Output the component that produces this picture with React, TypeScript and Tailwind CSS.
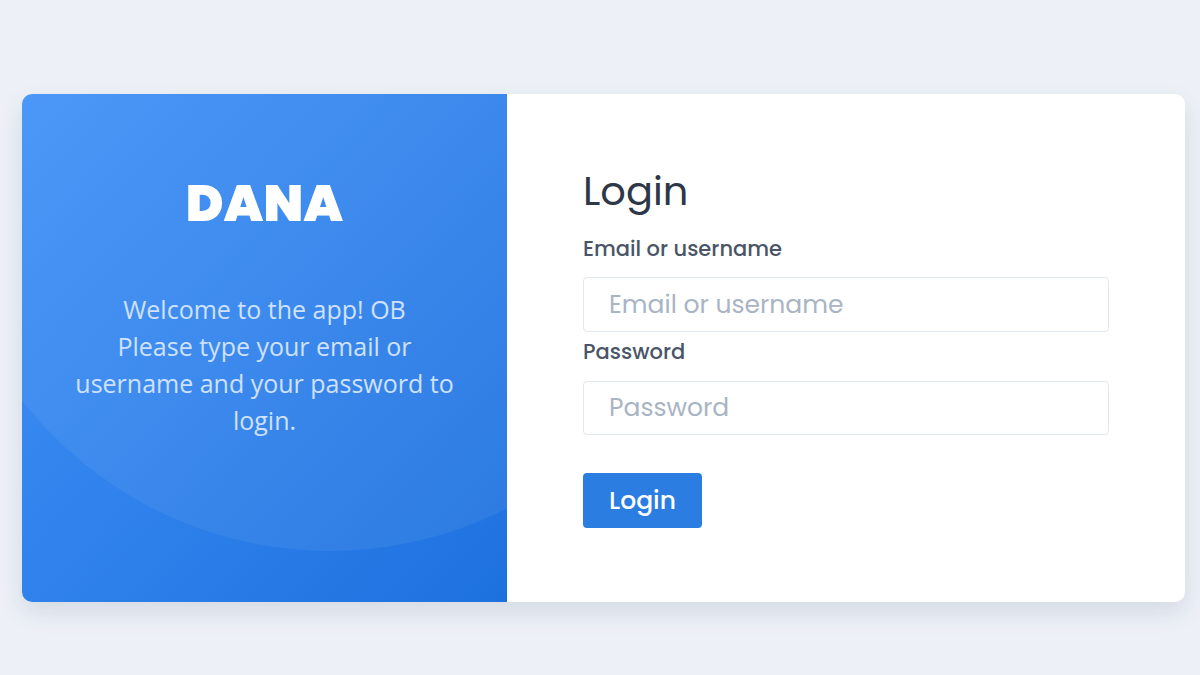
import React from "react";

export default function App() {
  return (
    <div className="w-[1200px] h-[675px] bg-[#edf1f7] flex items-start pl-[22px] pt-[94px]">
      <div className="w-[1163px] h-[508px] flex rounded-[10px] overflow-hidden shadow-[0_10px_25px_rgba(30,50,90,0.12)] bg-white">
        <div className="relative w-[485px] h-full overflow-hidden bg-gradient-to-br from-[#4192f8] to-[#1d71df] flex flex-col items-center">
          <div className="absolute left-[-82px] top-[-323px] w-[780px] h-[780px] rounded-full bg-white/[0.06]" />
          <h1 className="relative mt-[84px] text-white text-[51px] leading-none font-black tracking-[0.3px] font-['Poppins','Inter',sans-serif]">DANA</h1>
          <p className="relative mt-[62px] text-center text-[#cfe1fc] text-[25px] leading-[37px] font-['Open_Sans',sans-serif] w-[392px]">
            Welcome to the app! OB
            <br />
            Please type your email or username and your password to login.
          </p>
        </div>
        <div className="flex-1 pl-[76px] pr-[76px] pt-[77px] font-['Poppins','Inter',sans-serif]">
          <h2 className="text-[40px] leading-none text-[#2d3748] font-normal">Login</h2>
          <label className="block mt-[26px] text-[21px] leading-[24px] text-[#4a5568] font-medium">Email or username</label>
          <input
            className="mt-[16px] block w-[526px] h-[55px] rounded-[4px] border border-[#e2e8f0] px-[25px] text-[25px] text-[#2d3748] placeholder:text-[#a9b4c4] outline-none"
            placeholder="Email or username"
          />
          <label className="block mt-[8px] text-[21px] leading-[24px] text-[#4a5568] font-medium">Password</label>
          <input
            type="password"
            className="mt-[17px] block w-[526px] h-[54px] rounded-[4px] border border-[#e2e8f0] px-[25px] text-[25px] text-[#2d3748] placeholder:text-[#a9b4c4] outline-none"
            placeholder="Password"
          />
          <button className="mt-[38px] w-[119px] h-[55px] rounded-[4px] bg-[#2b7de1] text-white text-[25px] font-medium">Login</button>
        </div>
      </div>
    </div>
  );
}
